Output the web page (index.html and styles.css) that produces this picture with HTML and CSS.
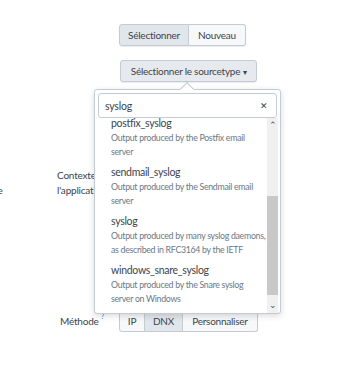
FILE: index.html
```html
<!DOCTYPE html>
<html lang="fr">

<head>
    <meta charset="UTF-8">
    <meta name="viewport" content="width=device-width, initial-scale=1.0">
    <title>Sourcetype</title>
    <link rel="stylesheet" href="styles.css">
</head>

<body>
    <div class="form">
        <div class="form__row">
            <div class="form__label"></div>
            <div class="btn-group">
                <button class="btn btn--active btn--w70">Sélectionner</button>
                <button class="btn btn--w57">Nouveau</button>
            </div>
        </div>

        <div class="form__row form__row--source">
            <div class="form__label"></div>
            <button class="btn btn--single">Sélectionner le sourcetype <span class="caret">&#9662;</span></button>
        </div>

        <div class="form__row form__row--context">
            <span class="stray">de</span>
            <div class="form__label form__label--wrap">Contexte de<br>l'application</div>
        </div>

        <div class="form__row form__row--method">
            <div class="form__label">Méthode <sup class="help">?</sup></div>
            <div class="btn-group">
                <button class="btn btn--w26">IP</button>
                <button class="btn btn--active btn--w38">DNX</button>
                <button class="btn btn--w75">Personnaliser</button>
            </div>
        </div>
    </div>

    <div class="popover">
        <span class="popover__arrow"></span>
        <div class="search">
            <span class="search__value">syslog</span>
            <span class="search__clear">&#x2715;</span>
        </div>
        <div class="list">
            <div class="list__viewport">
                <div class="list__items">
                    <div class="item">
                        <div class="item__title">postfix_syslog</div>
                        <div class="item__desc">Output produced by the Postfix email<br>server</div>
                    </div>
                    <div class="item">
                        <div class="item__title">sendmail_syslog</div>
                        <div class="item__desc">Output produced by the Sendmail email<br>server</div>
                    </div>
                    <div class="item">
                        <div class="item__title">syslog</div>
                        <div class="item__desc">Output produced by many syslog daemons,<br>as described in RFC3164 by the IETF</div>
                    </div>
                    <div class="item">
                        <div class="item__title">windows_snare_syslog</div>
                        <div class="item__desc">Output produced by the Snare syslog<br>server on Windows</div>
                    </div>
                </div>
            </div>
            <div class="scrollbar">
                <span class="scrollbar__arrow">&#x2303;</span>
                <div class="scrollbar__track">
                    <div class="scrollbar__thumb"></div>
                </div>
                <span class="scrollbar__arrow scrollbar__arrow--down">&#x2304;</span>
            </div>
        </div>
    </div>
</body>

</html>
```

FILE: styles.css
```css
body {
    margin: 0;
    background-color: #fff;
    font-family: 'Lato', 'Open Sans', sans-serif;
    color: #3c444d;
    overflow: hidden;
}

.form {
    padding-top: 24px;
}

.form__row {
    display: flex;
    align-items: flex-start;
}

.form__label {
    width: 108px;
    flex-shrink: 0;
    margin-right: 11px;
    text-align: right;
    font-size: 10px;
    letter-spacing: -0.2px;
    line-height: 15px;
    color: #3c444d;
}

.form__row--source {
    margin-top: 14px;
    padding-left: 1px;
}

.form__row--context {
    margin-top: 86px;
}

.form__label--wrap {
    margin-left: 65px;
    width: 70px;
    text-align: left;
}

.stray {
    font-size: 10px;
    line-height: 15px;
    margin-top: 15px;
    margin-left: -8px;
    width: 0;
    white-space: nowrap;
}

.form__row--method {
    margin-top: 112px;
}

.form__row--method .form__label {
    line-height: 22px;
    margin-right: 15px;
    width: 104px;
}

.help {
    font-size: 7px;
    color: #1a6fa8;
    vertical-align: 6px;
    line-height: 0;
}

.btn-group {
    display: flex;
    border-radius: 3px;
    box-shadow: 0 1px 1px rgba(0, 0, 0, 0.08);
}

.btn {
    height: 22px;
    padding: 0;
    border: 1px solid #c3cbd4;
    background-color: #f7f8fa;
    color: #3c444d;
    font-family: 'Lato', 'Open Sans', sans-serif;
    font-size: 10px;
    letter-spacing: -0.25px;
    cursor: pointer;
    box-sizing: border-box;
}

.btn-group .btn + .btn {
    border-left: none;
}

.btn-group .btn:first-child {
    border-radius: 3px 0 0 3px;
}

.btn-group .btn:last-child {
    border-radius: 0 3px 3px 0;
}

.btn--active {
    background-color: #e1e6eb;
}

.btn--single {
    width: 137px;
    border-radius: 3px;
    background-color: #e6eaee;
    box-shadow: 0 1px 1px rgba(0, 0, 0, 0.08);
}

.caret {
    font-size: 8px;
}

.btn--w70 { width: 70px; }
.btn--w57 { width: 57px; }
.btn--w26 { width: 26px; }
.btn--w38 { width: 38px; }
.btn--w75 { width: 75px; }

.popover {
    position: absolute;
    left: 94px;
    top: 89px;
    width: 187px;
    height: 225px;
    box-sizing: border-box;
    background-color: #fff;
    border: 1px solid #c3cbd4;
    border-radius: 3px;
    box-shadow: 0 2px 6px rgba(0, 0, 0, 0.15);
    display: flex;
    flex-direction: column;
}

.popover__arrow {
    position: absolute;
    top: -6px;
    left: 87px;
    width: 9px;
    height: 9px;
    background-color: #fff;
    border-left: 1px solid #c3cbd4;
    border-top: 1px solid #c3cbd4;
    transform: rotate(45deg);
}

.search {
    margin: 3px 3px 0 3px;
    height: 25px;
    box-sizing: border-box;
    border: 1px solid #c3cbd4;
    border-radius: 3px;
    display: flex;
    align-items: center;
    justify-content: space-between;
    padding: 0 8px 0 6px;
    font-size: 10.5px;
    letter-spacing: -0.2px;
    position: relative;
    background-color: #fff;
}

.search__clear {
    font-size: 9px;
    color: #3c444d;
}

.list {
    flex: 1;
    display: flex;
    min-height: 0;
}

.list__viewport {
    flex: 1;
    overflow: hidden;
}

.list__items {
    margin-top: -6px;
}

.item {
    padding: 3px 0 2px 16px;
}

.item__title {
    font-size: 10.5px;
    letter-spacing: -0.3px;
    line-height: 16px;
    color: #3c444d;
}

.item__desc {
    font-size: 8.8px;
    letter-spacing: -0.3px;
    line-height: 14px;
    color: #6b7785;
    white-space: nowrap;
}

.scrollbar {
    width: 11px;
    margin-right: 2px;
    display: flex;
    flex-direction: column;
    background-color: #f0f0f0;
}

.scrollbar__arrow {
    height: 12px;
    font-size: 9px;
    line-height: 14px;
    text-align: center;
    color: #505050;
}

.scrollbar__arrow--down {
    line-height: 8px;
}

.scrollbar__track {
    flex: 1;
    padding-top: 66px;
    padding-bottom: 6px;
}

.scrollbar__thumb {
    height: 100%;
    background-color: #c8c8c8;
}
```
